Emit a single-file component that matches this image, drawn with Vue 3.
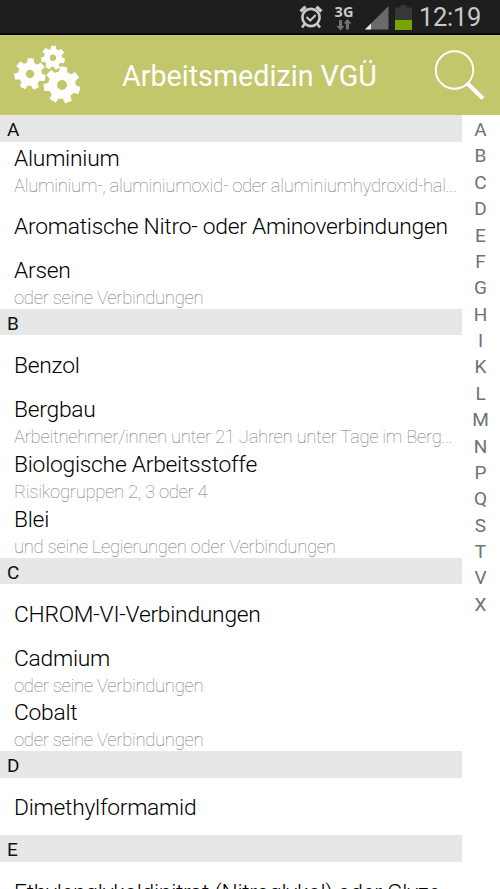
<script setup>
const sections = [
  { letter: 'A', items: [
    { title: 'Aluminium', sub: 'Aluminium-, aluminiumoxid- oder aluminiumhydroxid-hal...' },
    { title: 'Aromatische Nitro- oder Aminoverbindungen' },
    { title: 'Arsen', sub: 'oder seine Verbindungen' }
  ] },
  { letter: 'B', items: [
    { title: 'Benzol' },
    { title: 'Bergbau', sub: 'Arbeitnehmer/innen unter 21 Jahren unter Tage im Berg...' },
    { title: 'Biologische Arbeitsstoffe', sub: 'Risikogruppen 2, 3 oder 4' },
    { title: 'Blei', sub: 'und seine Legierungen oder Verbindungen' }
  ] },
  { letter: 'C', items: [
    { title: 'CHROM-VI-Verbindungen' },
    { title: 'Cadmium', sub: 'oder seine Verbindungen' },
    { title: 'Cobalt', sub: 'oder seine Verbindungen' }
  ] },
  { letter: 'D', items: [{ title: 'Dimethylformamid' }] },
  { letter: 'E', items: [{ title: 'Ethylenglykoldinitrat (Nitroglykol) oder Glyze...' }] }
]
const index = 'ABCDEFGHIKLMNPQSTVX'.split('')

function gear(cx, cy, r, hole, start) {
  const n = 7
  const root = r * 0.74
  const pts = []
  for (let i = 0; i < n; i++) {
    const a = start + (i * 360) / n
    for (const [da, rr] of [[-15, root], [-9.5, r], [9.5, r], [15, root]]) {
      const t = ((a + da) * Math.PI) / 180
      pts.push(`${(cx + rr * Math.cos(t)).toFixed(2)} ${(cy + rr * Math.sin(t)).toFixed(2)}`)
    }
  }
  return `M${pts.join('L')}Z M${cx - hole} ${cy}a${hole} ${hole} 0 1 0 ${hole * 2} 0a${hole} ${hole} 0 1 0 ${-hole * 2} 0Z`
}
const gears = [
  gear(20, 32, 15.3, 4.8, -87),
  gear(43, 15.7, 11.5, 3.8, -87),
  gear(52, 43, 18, 5.6, -85)
]
</script>

<template>
  <div class="screen">
    <div class="status">
      <svg class="alarm" width="24" height="26" viewBox="0 0 24 26" fill="none" stroke="#c9c9c9">
        <circle cx="12" cy="13.500" r="8.600" stroke-width="2.600" />
        <path d="M7.500 13l3.700 3.500 5.500-5.500" stroke-width="2" />
        <path d="M1.600 7.500l5-4.700M22.400 7.500l-5-4.700" stroke-width="3.400" />
        <path d="M5.700 20l-2.700 3.500M18.300 20l2.700 3.500" stroke-width="2.600" />
      </svg>
      <div class="net">
        <span>3G</span>
        <svg width="16" height="12" viewBox="0 0 16 12" fill="#727272">
          <path d="M3 1h3v6h2.500L4.500 11.500.500 7H3zM10 10.500h3v-6h2.500L11.500 0 7.500 4.500H10z" />
        </svg>
      </div>
      <svg class="signal" width="24" height="24" viewBox="0 0 24 24">
        <path d="M23.500 0V23.500H0z" fill="#6a6a6a" /><path d="M6 17.500v6H0z" fill="#e8e8e8" />
      </svg>
      <svg class="battery" width="17" height="25" viewBox="0 0 17 25">
        <path d="M0 2.500h5.500V0h6v2.500H17V15H0z" fill="#373737" /><path d="M0 15h17v10H0z" fill="#75a408" />
      </svg>
      <span class="clock">12:19</span>
    </div>
    <header class="bar">
      <svg class="gears" width="74" height="66" viewBox="0 0 74 66"><path v-for="(d, i) in gears" :key="i" :d="d" /></svg>
      <h1>Arbeitsmedizin VGÜ</h1>
      <svg class="search" width="54" height="54" viewBox="0 0 54 54" fill="none" stroke="#fff">
        <circle cx="21.500" cy="22" r="18.700" stroke-width="1.900" />
        <path d="M34.500 35.500L50 50.500" stroke-width="4" />
      </svg>
    </header>
    <main class="body">
      <div class="list">
        <section v-for="s in sections" :key="s.letter">
          <h2>{{ s.letter }}</h2>
          <div v-for="item in s.items" :key="item.title" class="row" :class="{ single: !item.sub }">
            <div class="title">{{ item.title }}</div>
            <div v-if="item.sub" class="sub">{{ item.sub }}</div>
          </div>
        </section>
      </div>
      <nav class="index"><span v-for="l in index" :key="l">{{ l }}</span></nav>
    </main>
  </div>
</template>

<style>
body { margin: 0; overflow: hidden; }
</style>
<style scoped>
.screen { width: 500px; height: 889px; overflow: hidden; display: flex; flex-direction: column; background: #fff; font-family: Roboto, sans-serif; }
.status { box-sizing: border-box; height: 35px; flex: none; display: flex; align-items: flex-start; background: #1e1e1e; border-bottom: 2px solid #080806; padding-left: 299px; color: #c9c9c9; }
.alarm { margin-top: 4px; }
.net { width: 20px; margin: 4px 0 0 11px; display: flex; flex-direction: column; align-items: center; font: 700 14.500px/15px "Open Sans", sans-serif; }
.signal { margin: 6px 0 0 11px; }
.battery { margin: 5px 0 0 6px; }
.clock { margin: 2px 0 0 7px; font-size: 25.500px; letter-spacing: -0.3px; line-height: 31px; white-space: nowrap; }
.bar { height: 80px; flex: none; display: flex; align-items: flex-start; background: #c2c76c; color: #fff; }
.gears { margin: 7px 0 0 10px; }
.gears path { fill: #fff; fill-rule: evenodd; stroke: #fff; stroke-width: 1.2; stroke-linejoin: round; }
h1 { flex: 1; margin: 23px 0 0 38px; font-size: 28.700px; font-weight: 400; line-height: 36px; white-space: nowrap; }
.search { margin: 13px 13px 0 0; }
.body { flex: 1; min-height: 0; display: flex; overflow: hidden; }
.list { width: 462px; flex: none; }
h2 { box-sizing: border-box; height: 26.500px; margin: 0; padding: 2px 7px 0; background: #e7e7e7; color: #111; font-size: 19px; font-weight: 400; line-height: 25px; }
.row { box-sizing: border-box; height: 54.900px; padding: 3px 0 0 14px; overflow: hidden; }
.row.single { height: 57.550px; padding-top: 16.600px; }
.title { font-size: 22.800px; letter-spacing: -0.25px; line-height: 28px; font-weight: 300; color: #000; white-space: nowrap; }
.sub { font-size: 18.500px; letter-spacing: -0.32px; line-height: 26px; font-weight: 100; color: #777; white-space: nowrap; }
.index { flex: 1; display: flex; flex-direction: column; align-items: center; padding: 2px 1px 0 0; color: #6c7373; font-size: 19px; font-weight: 400; line-height: 26px; }
.index span { height: 26.380px; }
</style>
